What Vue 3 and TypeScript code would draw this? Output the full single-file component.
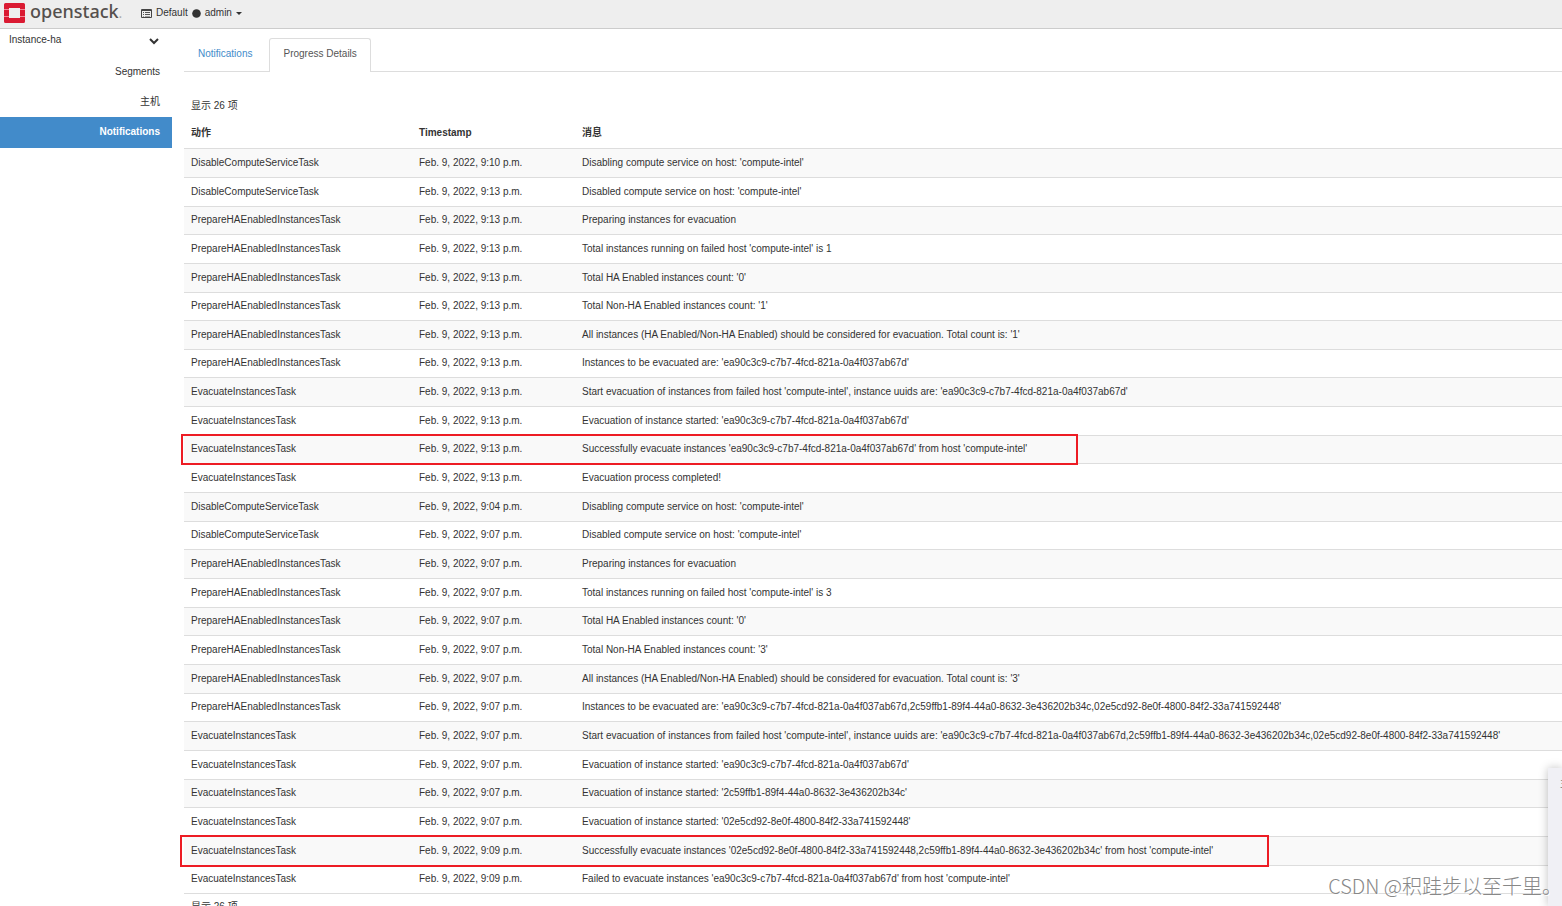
<script setup lang="ts">
interface Entry {
  action: string
  time: string
  message: string
  mark?: 'first' | 'second'
}

const disable = 'DisableComputeServiceTask'
const prepare = 'PrepareHAEnabledInstancesTask'
const evacuate = 'EvacuateInstancesTask'

const idA = 'ea90c3c9-c7b7-4fcd-821a-0a4f037ab67d'
const idB = '2c59ffb1-89f4-44a0-8632-3e436202b34c'
const idC = '02e5cd92-8e0f-4800-84f2-33a741592448'

const at = (clock: string): string => `Feb. 9, 2022, ${clock} p.m.`

const entries: Entry[] = [
  { action: disable, time: at('9:10'), message: "Disabling compute service on host: 'compute-intel'" },
  { action: disable, time: at('9:13'), message: "Disabled compute service on host: 'compute-intel'" },
  { action: prepare, time: at('9:13'), message: 'Preparing instances for evacuation' },
  { action: prepare, time: at('9:13'), message: "Total instances running on failed host 'compute-intel' is 1" },
  { action: prepare, time: at('9:13'), message: "Total HA Enabled instances count: '0'" },
  { action: prepare, time: at('9:13'), message: "Total Non-HA Enabled instances count: '1'" },
  { action: prepare, time: at('9:13'), message: "All instances (HA Enabled/Non-HA Enabled) should be considered for evacuation. Total count is: '1'" },
  { action: prepare, time: at('9:13'), message: `Instances to be evacuated are: '${idA}'` },
  { action: evacuate, time: at('9:13'), message: `Start evacuation of instances from failed host 'compute-intel', instance uuids are: '${idA}'` },
  { action: evacuate, time: at('9:13'), message: `Evacuation of instance started: '${idA}'` },
  { action: evacuate, time: at('9:13'), message: `Successfully evacuate instances '${idA}' from host 'compute-intel'`, mark: 'first' },
  { action: evacuate, time: at('9:13'), message: 'Evacuation process completed!' },
  { action: disable, time: at('9:04'), message: "Disabling compute service on host: 'compute-intel'" },
  { action: disable, time: at('9:07'), message: "Disabled compute service on host: 'compute-intel'" },
  { action: prepare, time: at('9:07'), message: 'Preparing instances for evacuation' },
  { action: prepare, time: at('9:07'), message: "Total instances running on failed host 'compute-intel' is 3" },
  { action: prepare, time: at('9:07'), message: "Total HA Enabled instances count: '0'" },
  { action: prepare, time: at('9:07'), message: "Total Non-HA Enabled instances count: '3'" },
  { action: prepare, time: at('9:07'), message: "All instances (HA Enabled/Non-HA Enabled) should be considered for evacuation. Total count is: '3'" },
  { action: prepare, time: at('9:07'), message: `Instances to be evacuated are: '${idA},${idB},${idC}'` },
  { action: evacuate, time: at('9:07'), message: `Start evacuation of instances from failed host 'compute-intel', instance uuids are: '${idA},${idB},${idC}'` },
  { action: evacuate, time: at('9:07'), message: `Evacuation of instance started: '${idA}'` },
  { action: evacuate, time: at('9:07'), message: `Evacuation of instance started: '${idB}'` },
  { action: evacuate, time: at('9:07'), message: `Evacuation of instance started: '${idC}'` },
  { action: evacuate, time: at('9:09'), message: `Successfully evacuate instances '${idC},${idB}' from host 'compute-intel'`, mark: 'second' },
  { action: evacuate, time: at('9:09'), message: `Failed to evacuate instances '${idA}' from host 'compute-intel'` },
]
</script>

<template>
  <div class="shell">
    <header class="topbar">
      <a class="brand" href="#">
        <svg class="logo" viewBox="0 0 21 20" aria-hidden="true">
          <path fill="#da1a32" d="M1.500 0h18a1.500 1.500 0 0 1 1.500 1.500V6h-5V5H5v1H0V1.500A1.500 1.500 0 0 1 1.500 0zM0 14h5v1h11v-1h5v4.500a1.500 1.500 0 0 1-1.500 1.500h-18A1.500 1.500 0 0 1 0 18.500z" />
          <path fill="#da1a32" d="M0 7h5v6H0zM16 7h5v6h-5z" />
          <path fill="#f0899a" d="M0 6h5v1H0zM16 6h5v1h-5zM0 13h5v1H0zM16 13h5v1h-5z" />
        </svg>
        <span class="wordmark">openstack<span class="dot">.</span></span>
      </a>
      <button class="context" type="button">
        <svg class="list-icon" viewBox="0 0 11 9" aria-hidden="true">
          <path fill="#444" fill-rule="evenodd" d="M1 0h9a1 1 0 0 1 1 1v7a1 1 0 0 1-1 1H1a1 1 0 0 1-1-1V1a1 1 0 0 1 1-1zM1 2v6h9V2z" />
          <path fill="#555" d="M2 3h1v1H2zM4 3h5v1H4zM2 5h1v1H2zM4 5h5v1H4zM2 7h1v.5H2zM4 7h5v.5H4z" />
        </svg>
        <span>Default</span>
        <svg class="bullet" viewBox="0 0 9 9" aria-hidden="true"><circle cx="4.500" cy="4.500" r="4.300" fill="#333" /></svg>
        <span>admin</span>
        <svg class="caret" viewBox="0 0 6 3" aria-hidden="true"><path fill="#333" d="M0 0h6L3 3z" /></svg>
      </button>
    </header>

    <div class="body">
      <nav class="sidebar">
        <button class="group" type="button">
          <span>Instance-ha</span>
          <svg class="chevron" viewBox="0 0 10 7" aria-hidden="true"><path fill="none" stroke="#333" stroke-width="2" d="M1 1l4 4 4-4" /></svg>
        </button>
        <a class="item" href="#">Segments</a>
        <a class="item" href="#">主机</a>
        <a class="item current" href="#">Notifications</a>
      </nav>

      <main class="content">
        <div class="tabs" role="tablist">
          <button class="tab" type="button" role="tab" aria-selected="false">Notifications</button>
          <button class="tab active" type="button" role="tab" aria-selected="true">Progress Details</button>
        </div>

        <p class="count">显示 26 项</p>
        <table class="grid">
          <colgroup>
            <col class="col-action" />
            <col class="col-time" />
            <col />
          </colgroup>
          <thead>
            <tr>
              <th scope="col">动作</th>
              <th scope="col">Timestamp</th>
              <th scope="col">消息</th>
            </tr>
          </thead>
          <tbody>
            <tr v-for="(entry, i) in entries" :key="i">
              <td>
                {{ entry.action }}
                <span v-if="entry.mark" class="mark" :class="entry.mark"></span>
              </td>
              <td>{{ entry.time }}</td>
              <td>{{ entry.message }}</td>
            </tr>
          </tbody>
        </table>
        <p class="count foot">显示 26 项</p>
      </main>
    </div>

    <aside class="drawer"><span class="drawer-text">主</span></aside>
    <div class="watermark">CSDN @积跬步以至千里。</div>
  </div>
</template>

<style>
body {
  margin: 0;
  background: #fff;
}
</style>

<style scoped>
.shell {
  position: relative;
  height: 100vh;
  overflow: hidden;
  font-family: "Liberation Sans", "Noto Sans CJK SC", sans-serif;
  font-size: 10px;
  line-height: 14px;
  color: #333;
}
button {
  font: inherit;
  color: inherit;
  background: none;
  border: 0;
  margin: 0;
  padding: 0;
}
a {
  color: inherit;
  text-decoration: none;
}
.topbar {
  display: flex;
  align-items: center;
  height: 28px;
  background: #eee;
  border-bottom: 1px solid #ccc;
}
.brand {
  display: flex;
  align-items: center;
  gap: 5px;
  box-sizing: border-box;
  width: 141px;
  padding: 0 0 4px 4px;
}
.logo {
  width: 21px;
  height: 20px;
  margin-top: 2px;
}
.wordmark {
  font-family: "Noto Sans", "Open Sans", sans-serif;
  font-size: 18px;
  font-weight: 500;
  line-height: 22px;
  color: #55504d;
}
.dot {
  font-size: 12px;
  color: #aaa;
}
.context {
  display: flex;
  align-items: center;
  gap: 4px;
  padding-bottom: 2px;
}
.list-icon {
  width: 11px;
  height: 9px;
}
.bullet {
  width: 9px;
  height: 9px;
}
.caret {
  width: 6px;
  height: 3px;
}
.body {
  display: flex;
}
.sidebar {
  display: flex;
  flex-direction: column;
  flex: none;
  width: 172px;
}
.group {
  display: flex;
  align-items: center;
  justify-content: space-between;
  height: 22px;
  margin-bottom: 6px;
  padding: 0 13px 0 9px;
}
.chevron {
  width: 10px;
  height: 7px;
  margin-top: 2px;
}
.item {
  padding: 8px 12px;
  text-align: right;
}
.item.current {
  padding: 8px 12px 9px;
  background: #428bca;
  color: #fff;
  font-weight: bold;
}
.content {
  flex: 1;
  min-width: 0;
  padding: 9px 0 0 12px;
}
.tabs {
  display: flex;
  gap: 3px;
  height: 33px;
  border-bottom: 1px solid #ddd;
}
.tab {
  height: 34px;
  padding: 0 13px 4px;
  border: 1px solid transparent;
  border-bottom: 0;
  border-radius: 3px 3px 0 0;
  color: #428bca;
}
.tab.active {
  border-color: #ddd;
  background: #fff;
  color: #555;
}
.count {
  margin: 27px 0 0;
  padding-left: 7px;
}
.grid {
  width: 100%;
  margin-top: 4px;
  table-layout: fixed;
  border-spacing: 0;
}
.col-action {
  width: 228px;
}
.col-time {
  width: 163px;
}
th,
td {
  box-sizing: border-box;
  padding: 0 7px;
  text-align: left;
  vertical-align: middle;
  white-space: nowrap;
  border-bottom: 1px solid #ddd;
}
th {
  height: 32px;
}
td {
  position: relative;
  height: 29px;
  padding-bottom: 1px;
}
tbody tr:nth-child(3n):nth-child(-n + 6) td,
tbody tr:nth-child(3n + 2):nth-child(n + 8) td {
  height: 28px;
}
tbody tr:nth-child(odd) {
  background: #f9f9f9;
}
.mark {
  position: absolute;
  z-index: 1;
  box-sizing: border-box;
  top: -2px;
  height: 31px;
  border: 2px solid #ed1c24;
}
.mark.first {
  left: -3px;
  width: 897px;
}
.mark.second {
  left: -4px;
  width: 1089px;
  height: 32px;
}
.count.foot {
  margin-top: 6px;
}
.drawer {
  position: absolute;
  z-index: 2;
  right: 0;
  bottom: 0;
  box-sizing: border-box;
  width: 14px;
  height: 138px;
  padding: 9px 0 0 12px;
  overflow: hidden;
  background: #f0f0f5;
  box-shadow: 0 0 10px rgba(0, 0, 0, 0.25);
}
.drawer-text {
  color: #777;
}
.watermark {
  position: absolute;
  z-index: 3;
  right: 0;
  bottom: 6px;
  font-family: "Noto Sans CJK SC", sans-serif;
  font-size: 20px;
  font-weight: 300;
  line-height: 28px;
  color: #888;
  text-shadow: 1px 1px 0 #fff;
}
</style>
